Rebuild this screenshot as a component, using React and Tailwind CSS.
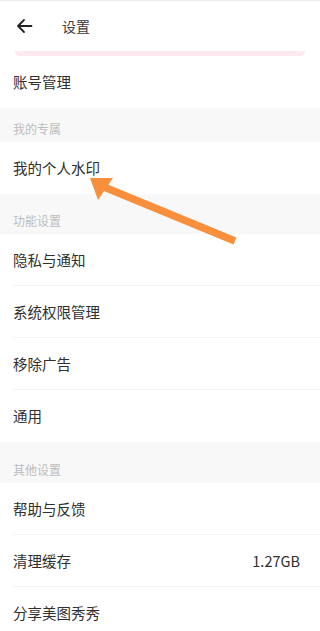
import React from "react";

const font = { fontFamily: '"Noto Sans CJK SC", "Noto Sans", sans-serif' };

function Row({ title, value, last }) {
  return (
    <div className="h-[52px] flex items-center pl-[13px] pr-[20px] relative bg-white">
      <span className="text-[14.5px] text-[#2f2f2f] flex-1">{title}</span>
      {value && <span className="text-[14.5px] text-[#2f2f2f]">{value}</span>}
      {!last && <div className="absolute left-[13px] right-0 bottom-0 h-px bg-[#f3f3f3]" />}
    </div>
  );
}

function Section({ label, h }) {
  return (
    <div className={"bg-[#f8f8f8] flex items-end pl-[13px] pb-[6px] " + h}>
      <span className="text-[12px] leading-[14px] text-[#bdbdbd]">{label}</span>
    </div>
  );
}

export default function App() {
  return (
    <div className="w-[320px] h-[631px] overflow-hidden bg-white relative" style={font}>
      <div className="h-px bg-[#ececec]" />
      <div className="h-[50px] flex items-center">
        <svg className="ml-[16px]" width="17" height="16" viewBox="0 0 17 16" fill="none" stroke="#222" strokeWidth="1.8" strokeLinecap="round" strokeLinejoin="round">
          <path d="M15.5 8H2M8 2L2 8l6 6" />
        </svg>
        <span className="ml-[29px] text-[14px] text-[#3a3a3a]">设置</span>
      </div>
      <div className="mx-[15px] h-[5px] rounded-b-[6px] bg-[#fce8ef]" />

      <Row title="账号管理" last />
      <Section label="我的专属" h="h-[34px]" />
      <Row title="我的个人水印" last />
      <Section label="功能设置" h="h-[40px]" />
      <Row title="隐私与通知" />
      <Row title="系统权限管理" />
      <Row title="移除广告" />
      <Row title="通用" last />
      <Section label="其他设置" h="h-[41px]" />
      <Row title="帮助与反馈" />
      <Row title="清理缓存" value="1.27GB" />
      <Row title="分享美图秀秀" last />

      <svg className="absolute left-0 top-0 pointer-events-none" width="320" height="631">
        <line x1="104" y1="187" x2="235" y2="241" stroke="#f78f3c" strokeWidth="7.5" />
        <polygon points="90,178 98,200 113,178" fill="#f78f3c" />
      </svg>
    </div>
  );
}
